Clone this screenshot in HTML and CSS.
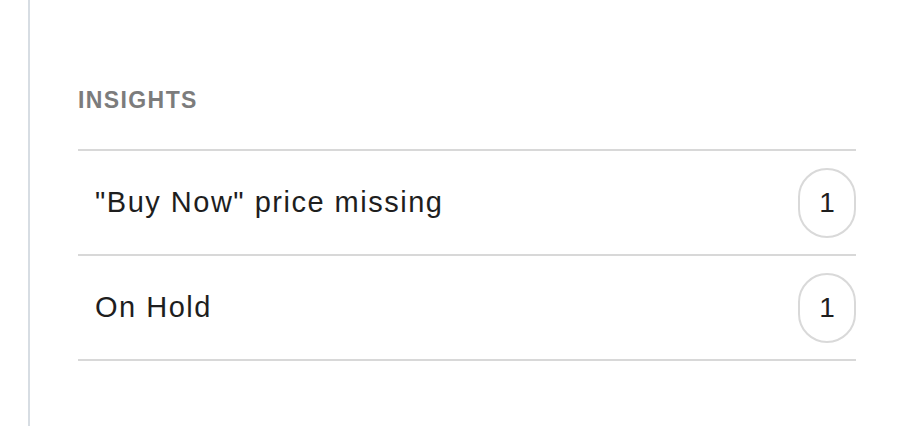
FILE: index.html
```html
<!DOCTYPE html>
<html>
<head>
<meta charset="utf-8">
<link rel="stylesheet" href="styles.css">
</head>
<body>
<div class="page">
  <aside class="rail"></aside>
  <section class="panel">
    <h2 class="heading">INSIGHTS</h2>
    <ul class="list">
      <li class="row">
        <span class="label">"Buy Now" price missing</span>
        <span class="badge">1</span>
      </li>
      <li class="row">
        <span class="label">On Hold</span>
        <span class="badge">1</span>
      </li>
    </ul>
  </section>
</div>
</body>
</html>
```

FILE: styles.css
```css
html, body {
  margin: 0;
  padding: 0;
  background: #ffffff;
}
body {
  font-family: "Liberation Sans", Arial, sans-serif;
  color: #1c1c1c;
}
.page {
  display: flex;
  height: 426px;
  overflow: hidden;
}
.rail {
  width: 28px;
  flex: none;
}
.panel {
  border-left: 2px solid #d7dde3;
  padding: 86px 62px 0 48px;
  flex: 1;
}
.heading {
  margin: 0;
  font-size: 23px;
  line-height: 28px;
  font-weight: 700;
  letter-spacing: 1.4px;
  color: #7c7c7c;
}
.list {
  list-style: none;
  margin: 35px 0 0 0;
  padding: 0;
  border-top: 2px solid #d8d8d8;
}
.row {
  display: flex;
  align-items: center;
  justify-content: space-between;
  height: 103px;
  border-bottom: 2px solid #d8d8d8;
  padding-left: 17px;
}
.label {
  font-size: 29px;
  letter-spacing: 1.5px;
  color: #1e1e1e;
}
.badge {
  box-sizing: border-box;
  width: 58px;
  height: 70px;
  border: 2px solid #d9d9d9;
  border-radius: 29px;
  display: flex;
  align-items: center;
  justify-content: center;
  font-size: 28px;
  color: #1e1e1e;
}
```
